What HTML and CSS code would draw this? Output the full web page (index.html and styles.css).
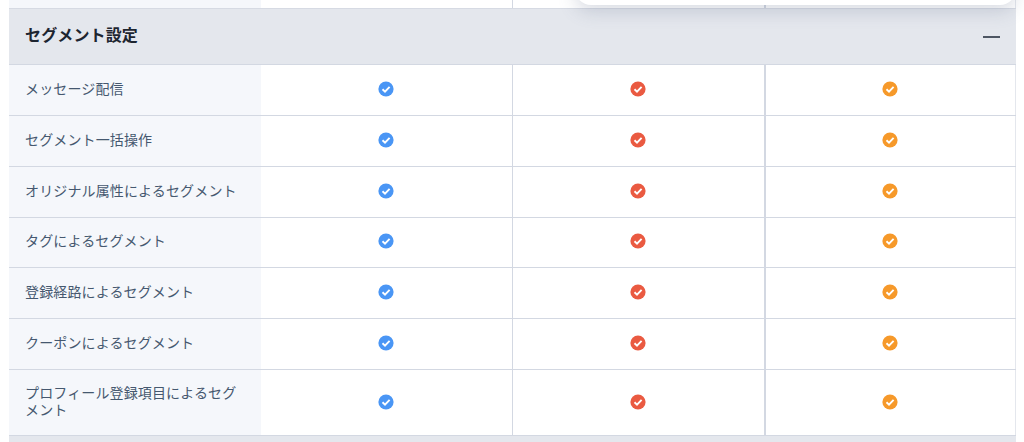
FILE: index.html
```html
<!DOCTYPE html>
<html lang="ja">
<head>
<meta charset="utf-8">
<title>セグメント設定</title>
<link rel="stylesheet" href="styles.css">
</head>
<body>
<svg class="defs" width="0" height="0" aria-hidden="true"><defs>
<symbol id="chk" viewBox="0 0 16 16"><circle cx="8" cy="8" r="7.6" fill="currentColor"/><path d="M4.5 8.3 7 10.7l4.6-4.8" fill="none" stroke="#fff" stroke-width="1.9"/></symbol>
</defs></svg>
<div class="popup"></div>
<main class="table">
  <div class="row top"><div class="label"></div><div class="cell"></div><div class="cell"></div><div class="cell last"></div></div>
  <div class="section"><h2>セグメント設定</h2><span class="minus"></span></div>
  <div class="row"><div class="label">メッセージ配信</div><div class="cell blue"><svg class="ic"><use href="#chk"/></svg></div><div class="cell red"><svg class="ic"><use href="#chk"/></svg></div><div class="cell orange last"><svg class="ic"><use href="#chk"/></svg></div></div>
  <div class="row"><div class="label">セグメント一括操作</div><div class="cell blue"><svg class="ic"><use href="#chk"/></svg></div><div class="cell red"><svg class="ic"><use href="#chk"/></svg></div><div class="cell orange last"><svg class="ic"><use href="#chk"/></svg></div></div>
  <div class="row"><div class="label">オリジナル属性によるセグメント</div><div class="cell blue"><svg class="ic"><use href="#chk"/></svg></div><div class="cell red"><svg class="ic"><use href="#chk"/></svg></div><div class="cell orange last"><svg class="ic"><use href="#chk"/></svg></div></div>
  <div class="row"><div class="label">タグによるセグメント</div><div class="cell blue"><svg class="ic"><use href="#chk"/></svg></div><div class="cell red"><svg class="ic"><use href="#chk"/></svg></div><div class="cell orange last"><svg class="ic"><use href="#chk"/></svg></div></div>
  <div class="row"><div class="label">登録経路によるセグメント</div><div class="cell blue"><svg class="ic"><use href="#chk"/></svg></div><div class="cell red"><svg class="ic"><use href="#chk"/></svg></div><div class="cell orange last"><svg class="ic"><use href="#chk"/></svg></div></div>
  <div class="row"><div class="label">クーポンによるセグメント</div><div class="cell blue"><svg class="ic"><use href="#chk"/></svg></div><div class="cell red"><svg class="ic"><use href="#chk"/></svg></div><div class="cell orange last"><svg class="ic"><use href="#chk"/></svg></div></div>
  <div class="row tall"><div class="label">プロフィール登録項目によるセグメント</div><div class="cell blue"><svg class="ic"><use href="#chk"/></svg></div><div class="cell red"><svg class="ic"><use href="#chk"/></svg></div><div class="cell orange last"><svg class="ic"><use href="#chk"/></svg></div></div>
  <div class="foot"></div>
</main>
</body>
</html>
```
FILE: styles.css
```css
* { box-sizing: border-box; }
html, body { margin: 0; height: 442px; overflow: hidden; background: #fff; }
body { font-family: "Noto Sans CJK JP", "Noto Sans", sans-serif; padding-left: 9px; position: relative; }
.defs { position: absolute; }
.table { width: 1007px; display: flex; flex-direction: column; }
.row { display: grid; grid-template-columns: 252px 252px 253px 250px; height: 50.85px; border-bottom: 1px solid #d3d8e2; }
.row.top { height: 8px; border-bottom: 0; }
.row.tall { height: 66px; }
.label { background: #f5f7fb; padding: 0 16px 3px 16px; display: flex; align-items: center; font-size: 14px; letter-spacing: .14px; line-height: 17px; color: #45586f; }
.cell { display: flex; align-items: center; justify-content: center; padding: 0 1px 2px 0; border-right: 1px solid #d3d8e2; }
.cell + .cell { border-right-width: 2px; padding-right: 2px; }
.cell.last { border-right: 1px solid #e4e7ed; padding-right: 2px; }
.blue { color: #4a96f5; }
.red { color: #ea5a41; }
.orange { color: #f6992a; }
.ic { width: 16px; height: 16px; display: block; }
.section { height: 57px; background: #e4e7ed; border-top: 1px solid #d6dae3; border-bottom: 1px solid #d3d8e2; padding: 0 16px 5px 16px; display: flex; align-items: center; justify-content: space-between; }
.section h2 { margin: 0; font-size: 16px; font-weight: 700; letter-spacing: .14px; color: #1d2530; line-height: 20px; }
.minus { width: 17px; height: 2px; background: #4d5663; margin-top: 5px; }
.foot { height: 7px; background: #e4e7ed; }
.popup { position: absolute; left: 575px; right: 8px; top: -20px; height: 25px; background: #fff; border-radius: 0 0 16px 16px; box-shadow: 0 6px 18px rgba(90,105,135,.24); }
```
